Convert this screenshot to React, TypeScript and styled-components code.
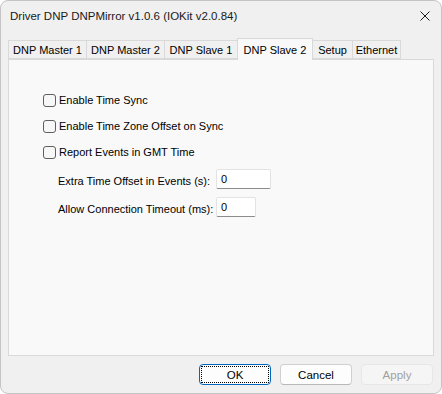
import React, { FC } from 'react'
import styled, { createGlobalStyle } from 'styled-components'

const GlobalStyle = createGlobalStyle`
  html, body {
    margin: 0;
    padding: 0;
    background: #ffffff;
  }
  body {
    font-family: 'Liberation Sans', Arial, sans-serif;
    font-size: 11px;
    color: #000;
  }
`

const TABS = [
  { name: 'DNP Master 1', width: 79 },
  { name: 'DNP Master 2', width: 79 },
  { name: 'DNP Slave 1', width: 74 },
  { name: 'DNP Slave 2', width: 76 },
  { name: 'Setup', width: 41 },
  { name: 'Ethernet', width: 49 },
]

const ACTIVE_TAB = 'DNP Slave 2'

const CHECKS = ['Enable Time Sync', 'Enable Time Zone Offset on Sync', 'Report Events in GMT Time']

const FIELDS = [
  { label: 'Extra Time Offset in Events (s):', value: '0', width: 55 },
  { label: 'Allow Connection Timeout (ms):', value: '0', width: 40 },
]

const Window = styled.div`
  box-sizing: border-box;
  width: 442px;
  height: 394px;
  border: 1px solid #c4c4c4;
  border-radius: 8px;
  background: #f0f0f0;
  display: flex;
  flex-direction: column;
  overflow: hidden;
`

const TitleBar = styled.div`
  height: 29px;
  display: flex;
  align-items: center;
  justify-content: space-between;
  padding: 0 11px 0 9px;
  color: #1a1a1a;
  font-size: 11.5px;
`

const CloseIcon = styled.svg`
  width: 10px;
  height: 10px;
  margin-top: 1px;
`

const Body = styled.div`
  flex: 1;
  display: flex;
  flex-direction: column;
  padding: 8px 7px 0 7px;
`

const TabStrip = styled.div`
  display: flex;
  align-items: flex-end;
  height: 21px;
  position: relative;
  z-index: 1;
`

const Tab = styled.div<{ $active?: boolean; $width: number }>`
  box-sizing: border-box;
  width: ${(p) => p.$width}px;
  height: ${(p) => (p.$active ? 22 : 19)}px;
  margin-bottom: ${(p) => (p.$active ? -1 : 0)}px;
  display: flex;
  align-items: center;
  justify-content: center;
  padding-top: ${(p) => (p.$active ? 0 : 1)}px;
  border: 1px solid #d9d9d9;
  border-bottom: ${(p) => (p.$active ? 'none' : '1px solid #d9d9d9')};
  margin-left: -1px;
  background: ${(p) => (p.$active ? '#f9f9f9' : '#f0f0f0')};
  white-space: nowrap;
  &:first-child {
    margin-left: 0;
  }
`

const Panel = styled.div`
  box-sizing: border-box;
  height: 297px;
  border: 1px solid #d9d9d9;
  background: #f9f9f9;
  display: flex;
  flex-direction: column;
  padding: 30px 0 0 34px;
`

const CheckList = styled.div`
  display: flex;
  flex-direction: column;
  gap: 6px;
`

const CheckRow = styled.label`
  height: 20px;
  display: flex;
  align-items: center;
  gap: 3px;
  white-space: nowrap;
`

const Box = styled.span`
  box-sizing: border-box;
  width: 13px;
  height: 13px;
  border: 1px solid #5f5f5f;
  border-radius: 3px;
  background: #f7f7f7;
`

const FieldGrid = styled.div`
  display: grid;
  grid-template-columns: 158px auto;
  row-gap: 8px;
  margin: 7px 0 0 15px;
  align-items: center;
`

const FieldLabel = styled.span`
  padding-top: 3px;
  white-space: nowrap;
`

const Edit = styled.div<{ $width: number }>`
  box-sizing: border-box;
  width: ${(p) => p.$width}px;
  height: 20px;
  background: #fff;
  border: 1px solid #e3e3e3;
  border-bottom-color: #8c8c8c;
  border-radius: 2px;
  padding: 3px 0 0 4px;
`

const Footer = styled.div`
  display: flex;
  justify-content: flex-end;
  gap: 9px;
  padding: 8px 1px 0 0;
`

const Button = styled.div<{ $primary?: boolean; $disabled?: boolean }>`
  box-sizing: border-box;
  width: 72px;
  height: 21px;
  display: flex;
  align-items: center;
  justify-content: center;
  position: relative;
  border-radius: 4px;
  border: 1px solid ${(p) => (p.$primary ? '#0067c0' : p.$disabled ? '#e6e6e6' : '#d0d0d0')};
  border-bottom-color: ${(p) => (p.$primary ? '#0067c0' : p.$disabled ? '#e6e6e6' : '#b8b8b8')};
  background: ${(p) => (p.$disabled ? '#f5f5f5' : '#fdfdfd')};
  color: ${(p) => (p.$disabled ? '#a0a0a0' : '#000')};
  font-size: 11.5px;
`

const FocusRing = styled.span`
  position: absolute;
  inset: 1px;
  border: 1px dotted #000;
`

const App: FC = () => (
  <>
    <GlobalStyle />
    <Window>
      <TitleBar>
        <span>Driver DNP DNPMirror v1.0.6 (IOKit v2.0.84)</span>
        <CloseIcon viewBox='0 0 10 10'>
          <path d='M0.5 0.5 L9.5 9.5 M9.5 0.5 L0.5 9.5' stroke='#1a1a1a' strokeWidth='1' fill='none' />
        </CloseIcon>
      </TitleBar>
      <Body>
        <TabStrip>
          {TABS.map((tab) => (
            <Tab key={tab.name} $width={tab.width} $active={tab.name === ACTIVE_TAB}>
              {tab.name}
            </Tab>
          ))}
        </TabStrip>
        <Panel>
          <CheckList>
            {CHECKS.map((label) => (
              <CheckRow key={label}>
                <Box />
                {label}
              </CheckRow>
            ))}
          </CheckList>
          <FieldGrid>
            {FIELDS.map((field) => (
              <React.Fragment key={field.label}>
                <FieldLabel>{field.label}</FieldLabel>
                <Edit $width={field.width}>{field.value}</Edit>
              </React.Fragment>
            ))}
          </FieldGrid>
        </Panel>
        <Footer>
          <Button $primary>
            <FocusRing />
            OK
          </Button>
          <Button>Cancel</Button>
          <Button $disabled>Apply</Button>
        </Footer>
      </Body>
    </Window>
  </>
)

export default App
